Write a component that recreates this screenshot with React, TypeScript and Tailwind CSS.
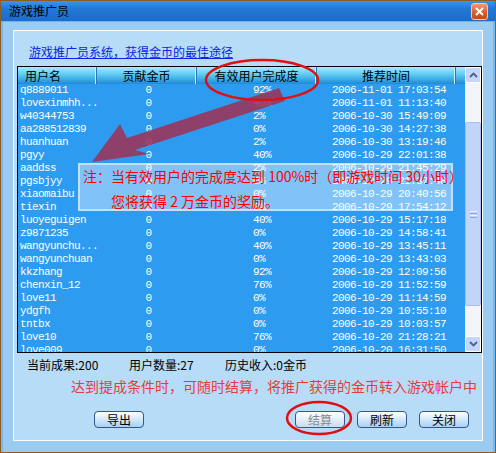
import React from "react";

const cjk = { fontFamily: '"Noto Sans CJK SC", "Noto Sans", sans-serif' };
const mono = { fontFamily: '"Liberation Mono", "DejaVu Sans Mono", monospace' };

const rows: [string, string, string][] = [
  ["q8889011", "92%", "2006-11-01 17:03:54"],
  ["lovexinmhh...", "40%", "2006-11-01 11:13:40"],
  ["w40344753", "2%", "2006-10-30 15:49:09"],
  ["aa288512839", "0%", "2006-10-30 14:27:38"],
  ["huanhuan", "2%", "2006-10-30 13:19:46"],
  ["pgyy", "40%", "2006-10-29 22:01:38"],
  ["aaddss", "2%", "2006-10-29 21:45:29"],
  ["pgsbjyy", "0%", "2006-10-29 21:37:48"],
  ["xiaomaibu", "0%", "2006-10-29 20:40:56"],
  ["tiexin", "0%", "2006-10-29 17:54:12"],
  ["luoyeguigen", "40%", "2006-10-29 15:17:18"],
  ["z9871235", "0%", "2006-10-29 14:58:41"],
  ["wangyunchu...", "40%", "2006-10-29 13:45:11"],
  ["wangyunchuan", "0%", "2006-10-29 13:43:03"],
  ["kkzhang", "92%", "2006-10-29 12:09:56"],
  ["chenxin_12", "76%", "2006-10-29 11:52:59"],
  ["love11", "0%", "2006-10-29 11:14:59"],
  ["ydgfh", "0%", "2006-10-29 10:55:10"],
  ["tntbx", "0%", "2006-10-29 10:03:57"],
  ["love10", "76%", "2006-10-20 21:28:21"],
  ["love009", "0%", "2006-10-20 16:31:50"],
];

function HeadCell({ w, children, left }: { w: string; children?: React.ReactNode; left?: boolean }) {
  return (
    <div
      className={`${w} h-full flex items-center border-r border-r-[#2a78b4] shadow-[inset_-1px_0_0_#c8f2ff] text-[12px] leading-none text-black ${left ? "pl-[7px]" : "justify-center"}`}
      style={cjk}
    >
      {children}
    </div>
  );
}

function Btn({ label, disabled }: { label: string; disabled?: boolean }) {
  return (
    <button
      className={`w-[50px] h-[17px] rounded-[4px] border border-[#34578c] text-[12px] leading-none flex items-center justify-center ${
        disabled ? "text-[#8a8a8a] bg-[linear-gradient(#ffffff,#c9dcef)]" : "text-black bg-[linear-gradient(#ffffff,#a6d0f6)]"
      }`}
      style={cjk}
    >
      {label}
    </button>
  );
}

function Scrollbar() {
  return (
    <div className="w-[16px] h-full bg-[#f3f5fb] flex flex-col">
      <div className="h-[16px] rounded-[2px] border border-white bg-[#c5d6fb] flex items-center justify-center">
        <svg width="9" height="6" viewBox="0 0 9 6">
          <path d="M1 5 L4.5 1.5 L8 5" stroke="#4d6185" strokeWidth="1.8" fill="none" />
        </svg>
      </div>
      <div className="mt-[39px] h-[184px] rounded-[2px] border border-[#a9bdf0] bg-[#c3d4f9] flex flex-col items-center justify-center gap-[1px]">
        <div className="w-[7px] h-px bg-[#eef3ff]" />
        <div className="w-[7px] h-px bg-[#8aa3e0]" />
        <div className="w-[7px] h-px bg-[#eef3ff]" />
        <div className="w-[7px] h-px bg-[#8aa3e0]" />
      </div>
      <div className="mt-auto h-[16px] rounded-[2px] border border-white bg-[#c5d6fb] flex items-center justify-center">
        <svg width="9" height="6" viewBox="0 0 9 6">
          <path d="M1 1 L4.5 4.5 L8 1" stroke="#4d6185" strokeWidth="1.8" fill="none" />
        </svg>
      </div>
    </div>
  );
}

export default function App() {
  return (
    <div className="relative w-[496px] h-[453px] border border-[#8c5c26] bg-[#9ccbf1] flex flex-col overflow-hidden">
      {/* title bar */}
      <div className="h-[21px] shrink-0 flex items-center justify-between bg-[linear-gradient(#3d93ea,#2477d6_40%,#1c6ccb)] border-b border-[#6fb2ee]">
        <span className="ml-[8px] text-[12px] leading-none text-black" style={cjk}>
          游戏推广员
        </span>
        <div className="mr-[7px] w-[17px] h-[17px] rounded-[3px] border border-[#f3c9b0] bg-[linear-gradient(#f39a6c,#de5a22_60%,#c8461a)] flex items-center justify-center">
          <svg width="9" height="9" viewBox="0 0 9 9">
            <path d="M1 1 L8 8 M8 1 L1 8" stroke="white" strokeWidth="2" />
          </svg>
        </div>
      </div>

      {/* body */}
      <div className="flex-1 px-[10px] pt-[8px] pb-[11px] border-l-2 border-r-2 border-[#7ab9ec]">
        <div className="h-full border border-white bg-[#b6dcf8] flex flex-col">
          <div className="mt-[14px] ml-[15px] text-[12px] leading-[14px] text-[#0a24e6] underline" style={cjk}>
            游戏推广员系统，获得金币的最佳途径
          </div>

          {/* table */}
          <div className="mt-[7px] ml-[3px] w-[465px] h-[287px] border border-black flex bg-[#2d9bf0]">
            <div className="flex-1 flex flex-col overflow-hidden">
              <div className="h-[17px] shrink-0 flex bg-[linear-gradient(#a9eafb,#5ccaf2_45%,#1f8ad6)]">
                <HeadCell w="w-[79px]" left>用户名</HeadCell>
                <HeadCell w="w-[100px]">贡献金币</HeadCell>
                <HeadCell w="w-[120px]">有效用户完成度</HeadCell>
                <HeadCell w="w-[139px]">推荐时间</HeadCell>
                <div className="flex-1" />
              </div>
              <div className="flex-1 overflow-hidden text-white text-[11px] tracking-[-0.6px]" style={mono}>
                {rows.map(([name, pct, time]) => (
                  <div key={name + time} className="h-[13px] flex items-center leading-[13px]">
                    <div className="w-[79px] pl-[2px] whitespace-nowrap">{name}</div>
                    <div className="w-[100px] text-center pl-[3px]">0</div>
                    <div className="w-[120px] pl-[56px]">{pct}</div>
                    <div className="w-[139px] pl-[15px] whitespace-nowrap">{time}</div>
                  </div>
                ))}
              </div>
            </div>
            <Scrollbar />
          </div>

          {/* stats */}
          <div className="mt-[5px] ml-[13px] flex text-[12px] leading-[14px] text-black" style={cjk}>
            <span className="w-[102px]">当前成果:200</span>
            <span className="w-[96px]">用户数量:27</span>
            <span>历史收入:0金币</span>
          </div>

          <div className="mt-[7px] ml-[57px] text-[14px] leading-[14px] text-[#e83c3c] whitespace-nowrap" style={cjk}>
            达到提成条件时，可随时结算，将推广获得的金币转入游戏帐户中
          </div>

          <div className="mt-[18px] ml-[80px] flex">
            <Btn label="导出" />
            <div className="ml-[151px] flex gap-[12px]">
              <Btn label="结算" disabled />
              <Btn label="刷新" />
              <Btn label="关闭" />
            </div>
          </div>
        </div>
      </div>

      {/* note box overlay */}
      <div className="absolute left-[77px] top-[162px] w-[375px] h-[48px] bg-white/40 border-2 border-white/50 text-[#ff0000] text-[14px] leading-[14px]" style={cjk}>
        <div className="mt-[4px] ml-[3px] whitespace-nowrap">注：当有效用户的完成度达到 100%时（即游戏时间 30小时）</div>
        <div className="mt-[11px] ml-[31px] whitespace-nowrap">您将获得 2 万金币的奖励。</div>
      </div>

      {/* annotations */}
      <svg className="absolute -left-px -top-px pointer-events-none" width="496" height="453" viewBox="0 0 496 453">
        <path
          d="M92 162 L120 124 L127 138 L279 88 L285 101 L135 150 L149 154 Z"
          fill="#9c3358"
          opacity="0.88"
        />
        <ellipse cx="262" cy="80" rx="56" ry="20" fill="none" stroke="#e01010" strokeWidth="2.5" />
        <ellipse cx="319" cy="418" rx="32" ry="16" fill="none" stroke="#e01010" strokeWidth="2.5" />
      </svg>
    </div>
  );
}
